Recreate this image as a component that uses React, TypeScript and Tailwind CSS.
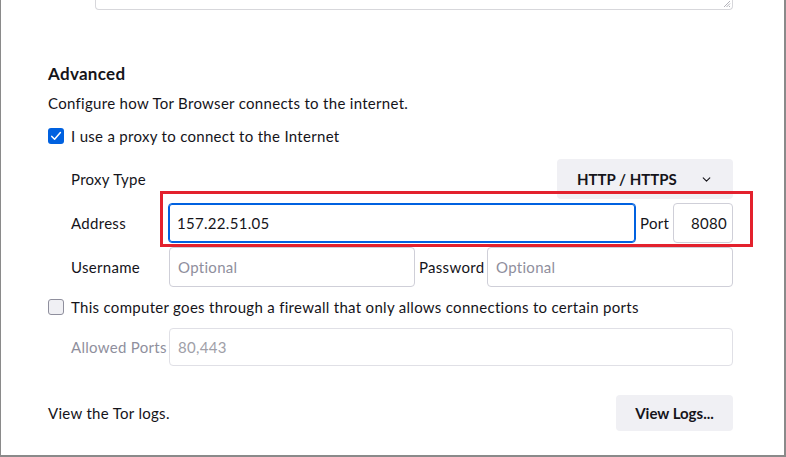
import React from 'react';

const font = "font-['Lato','Liberation_Sans',sans-serif]";

function CheckBox({ checked }: { checked: boolean }) {
  return checked ? (
    <span className="flex h-4 w-4 shrink-0 items-center justify-center rounded-[3px] bg-[#0061e0]">
      <svg width="12" height="12" viewBox="0 0 12 12" fill="none">
        <path d="M1.8 6.4l2.8 2.9L10.4 2.6" stroke="white" strokeWidth="1.5" strokeLinecap="round" strokeLinejoin="round" />
      </svg>
    </span>
  ) : (
    <span className="h-4 w-4 shrink-0 rounded-[3px] border border-[#8f8f9d] bg-[#f0f0f4]" />
  );
}

function Field({ value, placeholder, className, focused, disabled, right }: {
  value?: string;
  placeholder?: string;
  className?: string;
  focused?: boolean;
  disabled?: boolean;
  right?: boolean;
}) {
  const border = focused
    ? 'border-[#0061e0] shadow-[0_0_0_1px_#0061e0_inset]'
    : disabled
      ? 'border-[#e0e0e6]'
      : 'border-[#cfcfd8]';
  const text = value ? (disabled ? 'text-[#a0a0a8]' : 'text-[#15141a]') : 'text-[#8f8f9d]';
  return (
    <div className={`flex h-10 items-center rounded-[4px] border bg-white px-[8px] ${border} ${className ?? ''} ${right ? 'justify-end pr-[5px]' : ''}`}>
      <span className={`text-[15px] ${text}`}>{value ?? placeholder}</span>
    </div>
  );
}

export default function App() {
  return (
    <div className={`relative h-[457px] w-[786px] overflow-hidden bg-white ${font} text-[15px] tracking-[0.3px] text-[#15141a]`}>
      <div className="absolute inset-0 border-b-2 border-l border-r-2 border-[#8a8a8a] pointer-events-none" />

      {/* tail of the textarea above */}
      <div className="relative ml-[95px] h-[10px] w-[638px] rounded-b-[4px] border-x border-b border-[#d7d7db]">
        <svg className="absolute bottom-[1px] right-[1px]" width="8" height="8" viewBox="0 0 8 8">
          <path d="M7 1L1 7M7 3.5L3.5 7M7 6L6 7" stroke="#a0a0a8" strokeWidth="0.8" />
        </svg>
      </div>

      <div className="pl-[48px] pr-[53px]">
        <h2 className="mt-[52px] text-[17px] font-bold leading-6">Advanced</h2>
        <p className="mt-[5px] leading-6">Configure how Tor Browser connects to the internet.</p>

        <label className="mt-[9px] flex h-6 items-center gap-[7px]">
          <CheckBox checked />
          <span>I use a proxy to connect to the Internet</span>
        </label>

        <div className="mt-[11px] flex flex-col gap-1 pl-[23px]">
          <div className="flex h-10 items-center">
            <span className="w-[98px]">Proxy Type</span>
            <div className="flex-1" />
            <button className="flex h-10 w-[176px] items-center justify-between rounded-[4px] bg-[#f0f0f4] pl-[20px] pr-[21px] font-bold tracking-normal">
              <span>HTTP / HTTPS</span>
              <svg width="11" height="11" viewBox="0 0 10 10" fill="none">
                <path d="M2 3.5l3 3 3-3" stroke="#15141a" strokeWidth="1" strokeLinecap="round" strokeLinejoin="round" />
              </svg>
            </button>
          </div>

          <div className="flex h-10 items-center">
            <span className="w-[97px]">Address</span>
            <Field value="157.22.51.05" focused className="w-[468px]" />
            <span className="ml-[4px] w-[33px]">Port</span>
            <Field value="8080" right className="w-[60px]" />
          </div>

          <div className="flex h-10 items-center">
            <span className="w-[98px]">Username</span>
            <Field placeholder="Optional" className="w-[246px]" />
            <span className="ml-[4px] w-[68px]">Password</span>
            <Field placeholder="Optional" className="w-[246px]" />
          </div>
        </div>

        <label className="mt-[8px] flex h-6 items-center gap-[7px]">
          <CheckBox checked={false} />
          <span>This computer goes through a firewall that only allows connections to certain ports</span>
        </label>

        <div className="mt-[9px] flex h-[38px] items-center pl-[23px]">
          <span className="w-[98px] text-[#8f8f9d]">Allowed Ports</span>
          <Field value="80,443" disabled className="h-[38px] flex-1" />
        </div>

        <div className="mt-[29px] flex items-center justify-between">
          <span>View the Tor logs.</span>
          <button className="h-9 w-[117px] rounded-[4px] bg-[#f0f0f4] font-bold tracking-normal">View Logs...</button>
        </div>
      </div>

      {/* red highlight round the address row */}
      <div className="absolute left-[160px] top-[191px] h-[56px] w-[593px] border-[3px] border-[#e3212d] pointer-events-none" />
    </div>
  );
}
